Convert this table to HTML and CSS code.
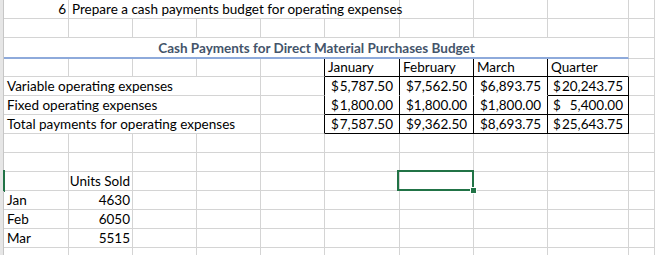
FILE: index.html
```html
<!DOCTYPE html>
<html>
<head>
<meta charset="utf-8">
<link rel="stylesheet" href="styles.css">
</head>
<body>
<div class="sheet">
  <!-- row 1 -->
  <div class="c h"></div>
  <div class="c r">6</div>
  <div class="c s5">Prepare a cash payments budget for operating expenses</div>
  <div class="c"></div><div class="c"></div><div class="c"></div><div class="c"></div>
  <!-- row 2 -->
  <div class="c h"></div>
  <div class="c"></div><div class="c"></div><div class="c"></div><div class="c"></div><div class="c"></div>
  <div class="c"></div><div class="c"></div><div class="c"></div><div class="c"></div><div class="c"></div>
  <!-- row 3 -->
  <div class="c h"></div>
  <div class="c s9 title">Cash Payments for Direct Material Purchases Budget</div>
  <div class="c"></div>
  <!-- row 4 -->
  <div class="c h"></div>
  <div class="c"></div><div class="c"></div><div class="c"></div><div class="c"></div>
  <div class="c kr"></div>
  <div class="c kr kb">January</div>
  <div class="c kr kb">February</div>
  <div class="c kr kb">March</div>
  <div class="c kb">Quarter</div>
  <div class="c"></div>
  <!-- row 5 -->
  <div class="c h"></div>
  <div class="c s4">Variable operating expenses</div>
  <div class="c kr"></div>
  <div class="c kr nb acct"><span>$</span><span>5,787.50</span></div>
  <div class="c kr nb acct"><span>$</span><span>7,562.50</span></div>
  <div class="c kr nb acct"><span>$</span><span>6,893.75</span></div>
  <div class="c kr kb acct q"><span>$</span><span>20,243.75</span></div>
  <div class="c"></div>
  <!-- row 6 -->
  <div class="c h"></div>
  <div class="c s4">Fixed operating expenses</div>
  <div class="c kr"></div>
  <div class="c kr kb acct"><span>$</span><span>1,800.00</span></div>
  <div class="c kr kb acct"><span>$</span><span>1,800.00</span></div>
  <div class="c kr kb acct"><span>$</span><span>1,800.00</span></div>
  <div class="c kr kb acct q"><span>$</span><span>5,400.00</span></div>
  <div class="c"></div>
  <!-- row 7 -->
  <div class="c h"></div>
  <div class="c s4">Total payments for operating expenses</div>
  <div class="c kr"></div>
  <div class="c kr kb acct"><span>$</span><span>7,587.50</span></div>
  <div class="c kr kb acct"><span>$</span><span>9,362.50</span></div>
  <div class="c kr kb acct"><span>$</span><span>8,693.75</span></div>
  <div class="c kr kb acct q"><span>$</span><span>25,643.75</span></div>
  <div class="c"></div>
  <!-- row 8 -->
  <div class="c h"></div>
  <div class="c"></div><div class="c"></div><div class="c"></div><div class="c"></div><div class="c"></div>
  <div class="c"></div><div class="c"></div><div class="c"></div><div class="c"></div><div class="c"></div>
  <!-- row 9 -->
  <div class="c h"></div>
  <div class="c"></div><div class="c"></div><div class="c"></div><div class="c"></div><div class="c"></div>
  <div class="c"></div><div class="c"></div><div class="c"></div><div class="c"></div><div class="c"></div>
  <!-- row 10 -->
  <div class="c h"><span class="rowmark"></span></div>
  <div class="c"></div>
  <div class="c r">Units Sold</div>
  <div class="c"></div><div class="c"></div><div class="c"></div><div class="c"></div>
  <div class="c sel"><span class="selbox"></span><span class="handle"></span></div>
  <div class="c"></div><div class="c"></div><div class="c"></div>
  <!-- row 11 -->
  <div class="c h"></div>
  <div class="c">Jan</div>
  <div class="c r">4630</div>
  <div class="c"></div><div class="c"></div><div class="c"></div><div class="c"></div>
  <div class="c"></div><div class="c"></div><div class="c"></div><div class="c"></div>
  <!-- row 12 -->
  <div class="c h"></div>
  <div class="c">Feb</div>
  <div class="c r">6050</div>
  <div class="c"></div><div class="c"></div><div class="c"></div><div class="c"></div>
  <div class="c"></div><div class="c"></div><div class="c"></div><div class="c"></div>
  <!-- row 13 -->
  <div class="c h"></div>
  <div class="c">Mar</div>
  <div class="c r">5515</div>
  <div class="c"></div><div class="c"></div><div class="c"></div><div class="c"></div>
  <div class="c"></div><div class="c"></div><div class="c"></div><div class="c"></div>
  <!-- row 14 -->
  <div class="c h"></div>
  <div class="c"></div><div class="c"></div><div class="c"></div><div class="c"></div><div class="c"></div>
  <div class="c"></div><div class="c"></div><div class="c"></div><div class="c"></div><div class="c"></div>
</div>
</body>
</html>
```
FILE: styles.css
```css
html, body {
  margin: 0;
  padding: 0;
  background: #ffffff;
}
body {
  font-family: Lato, "Liberation Sans", sans-serif;
  font-size: 13.5px;
  color: #000000;
  overflow: hidden;
}
.sheet {
  display: grid;
  grid-template-columns: 4px 65px 64px 64px 64px 64px 75px 74px 74px 81px 26px;
  grid-template-rows: 19px 19px 21px 18px repeat(10, 19px);
}
.c {
  box-sizing: border-box;
  border-right: 1px solid #d4d4d4;
  border-bottom: 1px solid #d4d4d4;
  display: flex;
  align-items: flex-end;
  padding: 0 2px 1px 3px;
  line-height: 15px;
  white-space: nowrap;
  min-width: 0;
}
.h {
  background: #e6e6e6;
  border-right-color: #c6c6c6;
  border-bottom: none;
  padding: 0;
  position: relative;
}
.r { justify-content: flex-end; }
.s4 { grid-column: span 4; }
.s5 { grid-column: span 5; }
.s9 { grid-column: span 9; }
.title {
  justify-content: center;
  font-weight: 700;
  color: #44546a;
  border-bottom: 2px solid #8eaadb;
  padding-bottom: 1px;
}
.kr { border-right-color: #000000; }
.kb { border-bottom-color: #000000; }
.nb { border-bottom-color: #ffffff; }
.acct {
  justify-content: space-between;
  padding: 0 6px 1px 6px;
}
.q { padding: 0 5px 1px 5px; }
.sel { position: relative; }
.selbox {
  position: absolute;
  left: -3px;
  top: -2px;
  width: 77px;
  height: 21px;
  box-sizing: border-box;
  border: 2px solid #217346;
}
.handle {
  position: absolute;
  left: 71px;
  top: 16px;
  width: 5px;
  height: 5px;
  background: #217346;
  box-shadow: 0 0 0 1px #ffffff;
}
.rowmark {
  position: absolute;
  left: 3px;
  top: -2px;
  width: 2px;
  height: 22px;
  background: #217346;
}
```
